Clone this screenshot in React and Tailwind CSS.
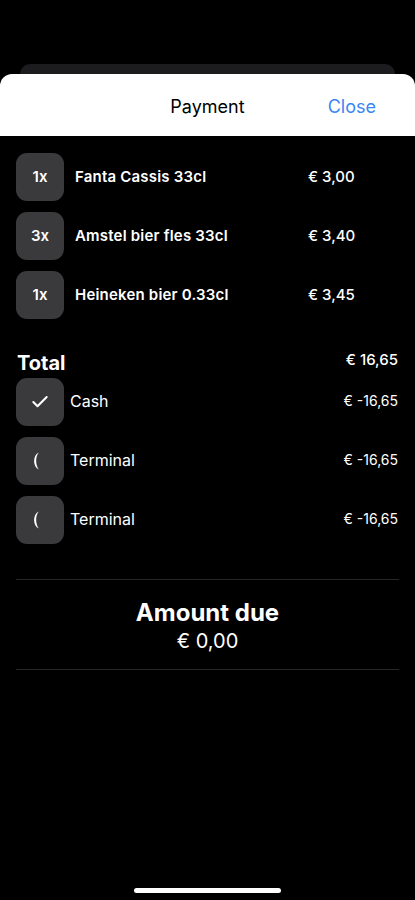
import React from 'react';
import { Check } from 'lucide-react';

const items = [
    { qty: '1x', name: 'Fanta Cassis 33cl', price: '€ 3,00' },
    { qty: '3x', name: 'Amstel bier fles 33cl', price: '€ 3,40' },
    { qty: '1x', name: 'Heineken bier 0.33cl', price: '€ 3,45' },
];

const payments = [
    { type: 'cash', label: 'Cash', amount: '€ -16,65' },
    { type: 'terminal', label: 'Terminal', amount: '€ -16,65' },
    { type: 'terminal', label: 'Terminal', amount: '€ -16,65' },
];

const Crescent = () => (
    <svg width="10" height="20" viewBox="0 0 10 20" fill="white">
        <path d="M8 1.5 C1.5 4 1.5 16 8 18.5 C4.5 15 4 5 8 1.5 Z" />
    </svg>
);

const App = () => {
    return (
        <div className="w-[415px] h-[900px] bg-black flex flex-col overflow-hidden text-white" style={{ fontFamily: 'Inter, "Liberation Sans", sans-serif' }}>
            <div className="h-[64px] shrink-0" />
            <div className="mx-[20px] h-[10px] rounded-t-[12px] bg-[#1c1c1e] shrink-0" />

            <div className="h-[62px] shrink-0 bg-white rounded-t-[12px] grid grid-cols-3 items-center px-4 pt-[2px]">
                <div />
                <div className="text-center text-[18px] text-black">Payment</div>
                <div className="text-right text-[18px] text-[#3a86f5] pr-[23px]">Close</div>
            </div>

            <div className="flex flex-col gap-[11px] px-4 pt-[17px]">
                {items.map((item, i) => (
                    <div key={i} className="flex items-center">
                        <div className="w-[48px] h-[48px] rounded-[11px] bg-[#3a3a3c] flex items-center justify-center text-[15px] font-semibold">
                            {item.qty}
                        </div>
                        <div className="ml-[11px] w-[233px] text-[15px] font-semibold tracking-[0.2px]">{item.name}</div>
                        <div className="text-[15px] font-medium">{item.price}</div>
                    </div>
                ))}
            </div>

            <div className="flex justify-between items-end px-4 mt-[31px] pr-[17px]">
                <div className="text-[20px] font-bold leading-none pl-[1px]">Total</div>
                <div className="text-[15px] font-medium relative -top-[1px]">€ 16,65</div>
            </div>

            <div className="flex flex-col gap-[11px] px-4 mt-[5px] pr-[17px]">
                {payments.map((p, i) => (
                    <div key={i} className="flex items-center">
                        <div className="w-[48px] h-[48px] rounded-[11px] bg-[#3a3a3c] flex items-center pl-[15px]">
                            {p.type === 'cash' ? <Check size={20} strokeWidth={2.5} className="ml-[-1px]" /> : <Crescent />}
                        </div>
                        <div className="ml-[6px] text-[16px] flex-1 relative -top-[1px]">{p.label}</div>
                        <div className="text-[14px] relative -top-[1px]">{p.amount}</div>
                    </div>
                ))}
            </div>

            <div className="mx-4 mt-[35px] border-t border-[#262628]" />
            <div className="flex flex-col items-center pt-[18px] pb-[15px]">
                <div className="text-[24px] font-bold leading-[30px]">Amount due</div>
                <div className="text-[20px] leading-[26px]">€ 0,00</div>
            </div>
            <div className="mx-4 border-t border-[#262628]" />

            <div className="flex-1" />
            <div className="flex justify-center pb-[7px]">
                <div className="w-[147px] h-[5px] rounded-full bg-white" />
            </div>
        </div>
    );
};

export default App;
